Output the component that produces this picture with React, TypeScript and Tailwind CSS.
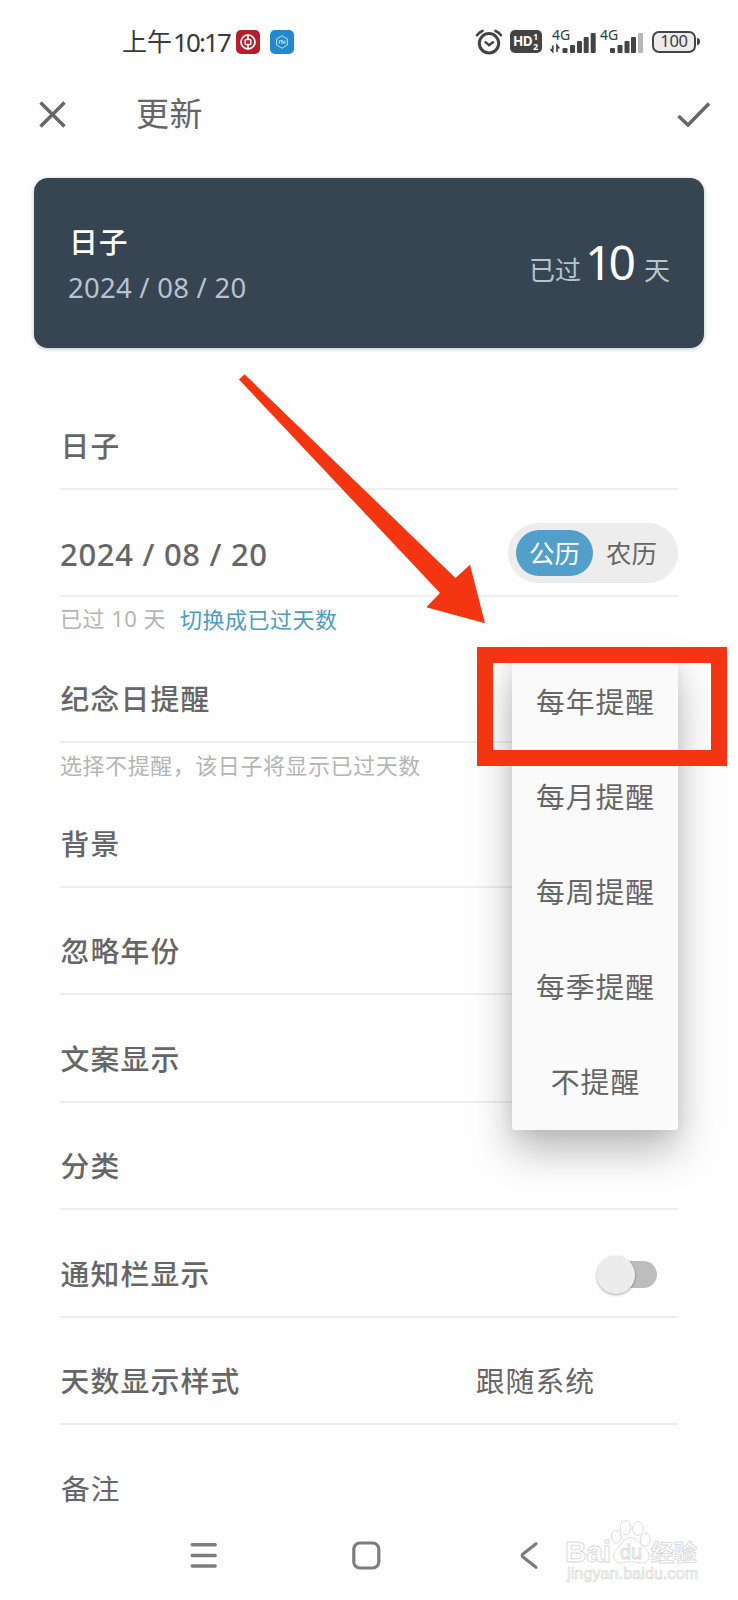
import type { ReactNode } from "react";

const menuItems = ["每年提醒", "每月提醒", "每周提醒", "每季提醒", "不提醒"];

const cjk = "font-['Noto_Sans_CJK_SC',sans-serif]";
const latin = "font-['Noto_Sans','Noto_Sans_CJK_SC',sans-serif]";

function StatusBar() {
  return (
    <div className="flex h-[83px] items-center pr-[38px] pl-[122px] text-[#3a3a3a]">
      <span className={`${cjk} pb-[3px] text-[25px] leading-10 whitespace-nowrap`}>上午</span>
      <span className={`${latin} w-[60px] pt-px pl-px text-[26px] leading-10 tracking-[-1.9px]`}>10:17</span>
      <svg className="ml-1 shrink-0" width="24" height="24" viewBox="0 0 24 24" fill="none">
        <rect width="24" height="24" rx="5" fill="#b51f2d" />
        <circle cx="12" cy="12" r="7" stroke="#fff" strokeWidth="1.7" />
        <rect x="9.2" y="9.6" width="5.600" height="4.800" rx="1" stroke="#fff" strokeWidth="1.500" />
        <path d="M12 4.500v5M12 14.500v5" stroke="#fff" strokeWidth="1.600" />
      </svg>
      <svg className="ml-[10px] shrink-0" width="24" height="24" viewBox="0 0 24 24" fill="none">
        <rect width="24" height="24" rx="5" fill="#2389cf" />
        <path d="M12 5.800l5.400 3.100v6.200L12 18.200l-5.400-3.100V8.900z" stroke="#bfe6fa" strokeWidth="1" />
        <path d="M9.300 13.800v-3h2.500v3M11.800 10.800h1.400v3M14.900 10.600v3.200" stroke="#d9f1fd" strokeWidth="0.900" />
      </svg>

      <div className="ml-auto flex items-center">
        <svg width="28" height="26" viewBox="0 0 28 26" fill="none" stroke="#444" strokeLinecap="round">
          <circle cx="14" cy="14.300" r="9.700" strokeWidth="3" />
          <path d="M2 6.200C3.600 4 5.500 2.600 7.500 1.900M26 6.200C24.400 4 22.500 2.600 20.500 1.900" strokeWidth="2.600" />
          <path d="M10.500 13.200l3.500 3 4-3" strokeWidth="2.400" />
        </svg>
        <div className="ml-[7px] flex h-[23px] w-8 items-center rounded-[5px] bg-[#444] pl-[3px] font-['Noto_Sans',sans-serif] text-white">
          <span className="text-[13.500px] leading-none font-bold tracking-[-0.600px]">HD</span>
          <span className="grid pl-px text-[9px] leading-[10px] font-bold">
            <span>1</span>
            <span>2</span>
          </span>
        </div>
        <div className="relative ml-[8px] h-7 w-[95px]">
          <svg width="95" height="28" viewBox="0 0 95 28" fill="#444">
            <path d="M2.700 17.500v6M0.500 21l2.200 2.500v-3M7 24v-6.500l2.300 3" stroke="#444" strokeWidth="1.700" fill="none" />
            <rect x="12.500" y="20" width="5" height="5" rx="1" />
            <rect x="20" y="17" width="5" height="8" rx="1" />
            <rect x="27" y="13" width="5" height="12" rx="1" />
            <rect x="33.700" y="9" width="5" height="16" rx="1" />
            <rect x="40.700" y="5" width="5" height="20" rx="1" />
            <rect x="60" y="20" width="5" height="5" rx="1" />
            <rect x="67.500" y="17" width="5" height="8" rx="1" />
            <rect x="74.500" y="13" width="5" height="12" rx="1" />
            <rect x="81" y="9" width="5" height="16" rx="1" />
            <rect x="88" y="5" width="5" height="20" rx="1" fill="#b7b7b7" />
          </svg>
          <span className={`${latin} absolute -top-[3px] left-[2px] text-[14px] leading-5`}>4G</span>
          <span className={`${latin} absolute -top-[3px] left-[50px] text-[14px] leading-5`}>4G</span>
        </div>
        <div
          className={`${latin} ml-[7px] flex h-[22px] w-[44px] items-center justify-center rounded-[7px] border-[2.500px] border-[#444] bg-[#ececec] text-[16.500px] leading-none tracking-[-0.300px]`}
        >
          100
        </div>
        <div className="ml-px h-[7px] w-[3px] rounded-r bg-[#444]" />
      </div>
    </div>
  );
}

function Row({ label, children }: { label: string; children?: ReactNode }) {
  return (
    <div className="flex h-[107.400px] items-end justify-between border-b-2 border-[#eeeeee] pb-[13px]">
      <span className={`${cjk} pl-[0.500px] text-[28.800px] leading-[60px] font-medium tracking-[1.200px] whitespace-nowrap`}>
        {label}
      </span>
      {children}
    </div>
  );
}

function Watermark() {
  return (
    <svg
      className="absolute top-[1515px] left-[562px]"
      width="142"
      height="75"
      viewBox="0 0 142 75"
      fill="#fff"
      stroke="#d9d9d9"
      strokeWidth="0.900"
    >
      <text x="3" y="47" fontFamily="Liberation Sans" fontWeight="700" fontSize="30" textLength="46">Bai</text>
      <ellipse cx="63.500" cy="12.500" rx="5.300" ry="7" />
      <ellipse cx="76" cy="13.500" rx="5.300" ry="7" />
      <ellipse cx="54.300" cy="21.800" rx="5" ry="6.300" />
      <ellipse cx="83.300" cy="24.500" rx="5" ry="6.300" />
      <path d="M69 22.500c-5.500 0-7.500 4-10.500 7.500-4 4.500-7 6-7 11 0 4.500 4 7.500 8.500 7 3-.4 6-1.300 9-1.300s6 .9 9 1.300c4.500.5 9-2.500 9-7 0-5-3.500-6.500-7.500-11-3-3.500-5-7.500-10.500-7.500z" />
      <text x="58" y="43.500" fontFamily="Liberation Sans" fontSize="20">du</text>
      <text x="89" y="45.500" fontFamily="Noto Sans CJK SC" fontWeight="700" fontSize="23">经验</text>
      <text x="5" y="64" fontFamily="Liberation Sans" fontSize="16" strokeWidth="0.700" textLength="131">jingyan.baidu.com</text>
    </svg>
  );
}

export default function App() {
  return (
    <div className={`${cjk} relative h-[1600px] w-[738px] overflow-hidden bg-[#fefefe] text-[#666]`}>
      <StatusBar />

      <header className="flex h-[62px] items-center pr-[27px] pl-[39px]">
        <svg width="27" height="27" viewBox="0 0 27 27" stroke="#666" strokeWidth="3.400">
          <path d="M1.500 1.500l24 24M25.500 1.500l-24 24" />
        </svg>
        <h1 className="ml-[70px] pb-[4px] text-[33px] leading-none tracking-[0.500px]">更新</h1>
        <svg className="ml-auto" width="34" height="27" viewBox="0 0 34 27" fill="none" stroke="#666" strokeWidth="3.400">
          <path d="M1.500 15l9.500 9L32 2.500" />
        </svg>
      </header>

      <section className="mx-[34px] mt-[33px] flex h-[170px] items-start justify-between rounded-[14px] bg-[#374553] px-[34px] shadow-[0_1px_4px_rgba(55,90,110,0.35)]">
        <div className="pt-[41px]">
          <h2 className="pl-px text-[28.800px] leading-[44px] font-medium tracking-[1px] text-white">日子</h2>
          <p className={`${latin} pt-[2px] text-[27.500px] leading-[46px] tracking-[0.250px] whitespace-pre text-[#b7c3cf]`}>
            2024 / 08 / 20
          </p>
        </div>
        <div className="flex items-baseline pt-[49px] text-[26px] leading-[70px] text-[#b3c6cf]">
          <span>已过</span>
          <span className={`${latin} mr-[12px] ml-[4px] text-[48px] tracking-[-4px] text-white`}>10</span>
          <span>天</span>
        </div>
      </section>

      <main className="mx-[60px] mt-[34.400px]">
        <Row label="日子" />
        <div className="flex h-[107.400px] items-end justify-between border-b-2 border-[#eeeeee] pb-[11px]">
          <span className={`${latin} text-[31px] leading-[60px] font-medium tracking-[0.700px] whitespace-pre`}>
            2024 / 08 / 20
          </span>
          <div className="mb-px flex h-[60px] w-[170px] items-center rounded-full bg-[#ededed] pl-2 text-[25.500px] leading-none">
            <span className="flex h-[46px] w-[77px] items-center justify-center rounded-full bg-[#519fca] pb-[3px] text-white">
              公历
            </span>
            <span className="ml-[13px] pb-[3px]">农历</span>
          </div>
        </div>
        <div className="flex h-[38px] items-center pt-[4px] text-[22px] leading-none tracking-[0.500px] text-[#b5b5b5]">
          <span className={`${latin} w-[120px]`}>已过 10 天</span>
          <span className="text-[#4d9dbd]">切换成已过天数</span>
        </div>
        <Row label="纪念日提醒" />
        <div className="flex h-[38px] items-center pt-[4px] text-[22px] leading-none tracking-[0.550px] text-[#b5b5b5]">
          选择不提醒，该日子将显示已过天数
        </div>
        <Row label="背景" />
        <Row label="忽略年份" />
        <Row label="文案显示" />
        <Row label="分类" />
        <Row label="通知栏显示">
          <div className="mr-[21px] mb-[9px] flex h-[38px] w-[60px] items-center">
            <div className="z-10 h-[38px] w-[38px] shrink-0 rounded-full bg-[#ececec] shadow-[0_1px_3px_rgba(0,0,0,0.350)]" />
            <div className="-ml-[26px] h-[27px] w-[48px] shrink-0 rounded-full bg-[#bdbdbd]" />
          </div>
        </Row>
        <Row label="天数显示样式">
          <span className="mr-[83px] text-[28.800px] leading-[60px] tracking-[1px]">跟随系统</span>
        </Row>
        <p className="pt-[33px] pl-px text-[28.800px] leading-[60px] tracking-[1px]">备注</p>
      </main>

      <ul className="absolute top-[654.500px] left-[512px] w-[166px] rounded-[3px] bg-[#fafafa] shadow-[0_20px_40px_rgba(0,0,0,0.280),0_2px_14px_rgba(0,0,0,0.060)]">
        {menuItems.map((item) => (
          <li key={item} className="h-[95px] pl-px text-center text-[28.800px] leading-[91px] tracking-[1px]">
            {item}
          </li>
        ))}
      </ul>

      {/* callout */}
      <div className="absolute top-[647px] left-[477px] h-[119px] w-[250px] border-[16px] border-[#f33511]" />
      <svg className="absolute top-[370px] left-[230px]" width="260" height="260" viewBox="230 370 260 260">
        <path d="M239 379.500l5.500-5.300L455.500 578l14.500-13.300 15 58.600-58.700-16L440 593z" fill="#f33511" />
      </svg>

      <nav className="absolute top-[1540px] left-[190px] flex items-center text-[#7d7d7d]">
        <svg width="28" height="30" viewBox="0 0 28 30" stroke="currentColor" strokeWidth="3.400" strokeLinecap="round">
          <path d="M2.200 4.800h23M2.200 15.500h23M2.200 26h23" />
        </svg>
        <svg className="ml-[133px]" width="30" height="30" viewBox="0 0 30 30" fill="none" stroke="currentColor" strokeWidth="3.200">
          <rect x="2.800" y="3" width="25" height="25" rx="6" />
        </svg>
        <svg className="ml-[138px]" width="20" height="30" viewBox="0 0 20 30" fill="none" stroke="currentColor" strokeWidth="3.200" strokeLinecap="round">
          <path d="M17 3.800L4.300 13.700q-2.300 1.800 0 3.600L17 27.200" />
        </svg>
      </nav>

      <Watermark />
    </div>
  );
}
